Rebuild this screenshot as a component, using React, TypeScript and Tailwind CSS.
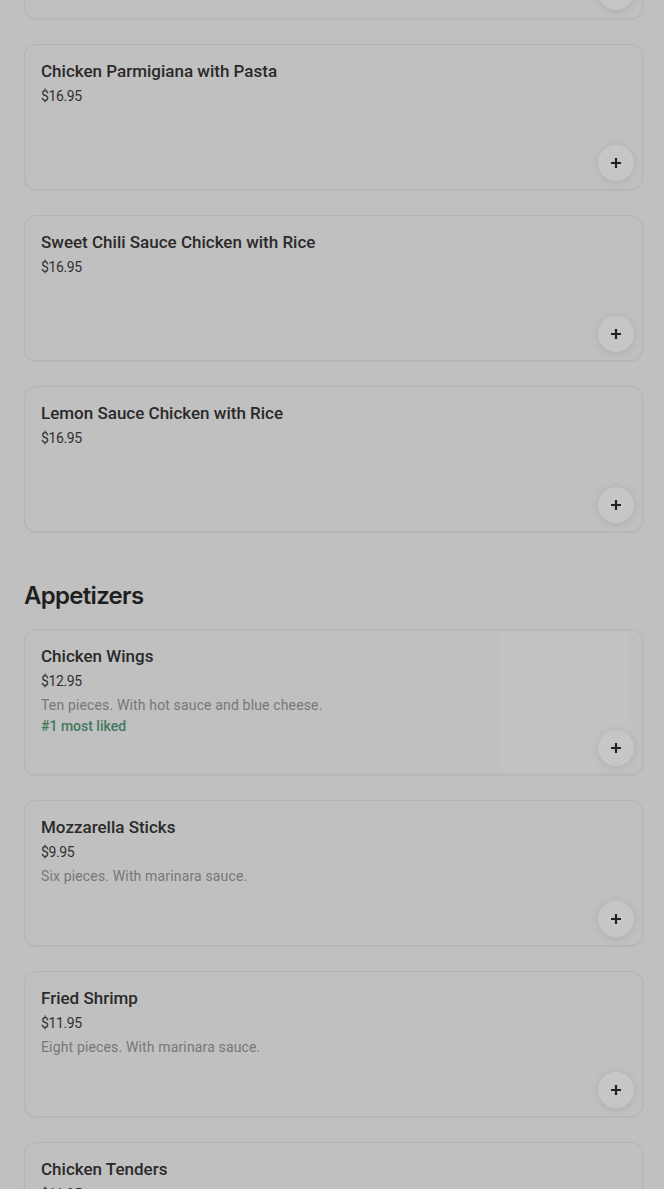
import * as React from "react";

type Item = {
  name: string;
  price: string;
  description?: string;
  badge?: string;
  image?: boolean;
};

const mains: Item[] = [
  { name: "Chicken Parmigiana with Pasta", price: "$16.95" },
  { name: "Sweet Chili Sauce Chicken with Rice", price: "$16.95" },
  { name: "Lemon Sauce Chicken with Rice", price: "$16.95" },
];

const appetizers: Item[] = [
  {
    name: "Chicken Wings",
    price: "$12.95",
    description: "Ten pieces. With hot sauce and blue cheese.",
    badge: "#1 most liked",
    image: true,
  },
  {
    name: "Mozzarella Sticks",
    price: "$9.95",
    description: "Six pieces. With marinara sauce.",
  },
  {
    name: "Fried Shrimp",
    price: "$11.95",
    description: "Eight pieces. With marinara sauce.",
  },
  { name: "Chicken Tenders", price: "$11.95" },
];

const AddButton = () => (
  <button className="absolute bottom-2 right-2 flex h-9 w-9 items-center justify-center rounded-full bg-[#c6c6c6] shadow-[0_1px_8px_rgba(0,0,0,0.1)]">
    <svg className="h-3 w-3" viewBox="0 0 12 12" fill="none">
      <path d="M6 1v10M1 6h10" stroke="#222" strokeWidth="2.2" />
    </svg>
  </button>
);

const ItemCard: React.FC<{ item?: Item; className?: string }> = ({
  item,
  className = "",
}) => (
  <div
    className={`relative flex h-[146px] shrink-0 overflow-hidden rounded-xl border border-[#b4b4b4] bg-[#c0c0c0] shadow-[0_1px_2px_rgba(0,0,0,0.04)] ${className}`}
  >
    {item && (
      <div className="flex-1 px-4 pt-4">
        <div className="text-[17px] font-medium leading-5 text-[#2a2a2a]">
          {item.name}
        </div>
        <div className="mt-[5px] text-[14px] leading-5 tracking-[-0.4px] text-[#303030]">
          {item.price}
        </div>
        {item.description && (
          <div className="mt-1 text-[14px] leading-5 tracking-[0.15px] text-[#777777]">
            {item.description}
          </div>
        )}
        {item.badge && (
          <div className="text-[14px] font-medium leading-[22px] text-[#437a5f]">
            {item.badge}
          </div>
        )}
      </div>
    )}
    {item?.image && (
      <div className="my-[2px] mr-[14px] w-[128px] bg-[#c2c2c2]" />
    )}
    <AddButton />
  </div>
);

export default function App() {
  return (
    <div
      className="h-[1189px] overflow-hidden bg-[#c0c0c0] pl-6 pr-[21px]"
      style={{ fontFamily: "Roboto, 'Liberation Sans', sans-serif" }}
    >
      <div className="flex flex-col gap-[25px]">
        {/* card scrolled mostly out of view */}
        <ItemCard className="mt-[-127px]" />
        {mains.map((m) => (
          <ItemCard key={m.name} item={m} />
        ))}
      </div>

      <h2
        className="mt-12 text-[24px] font-semibold leading-8 tracking-[-0.7px] text-[#1e1e1e]"
        style={{ fontFamily: "Inter, 'Liberation Sans', sans-serif" }}
      >
        Appetizers
      </h2>

      <div className="mt-[17px] flex flex-col gap-[25px]">
        {appetizers.map((a) => (
          <ItemCard key={a.name} item={a} />
        ))}
      </div>
    </div>
  );
}
